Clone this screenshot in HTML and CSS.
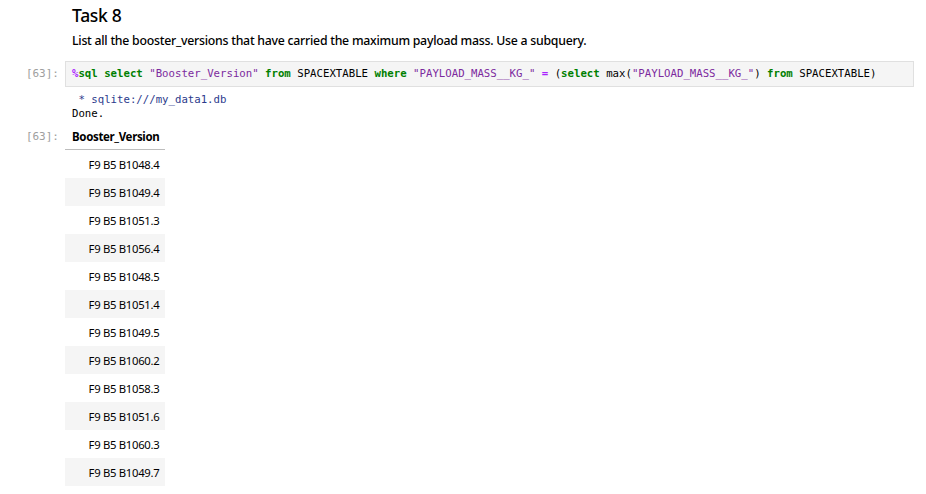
FILE: index.html
```html
<!DOCTYPE html>
<html>
<head>
<meta charset="utf-8">
<link rel="stylesheet" href="styles.css">
</head>
<body>
<div class="notebook">
  <div class="cell md">
    <div class="prompt"></div>
    <div class="content">
      <h3 class="title">Task 8</h3>
      <p class="desc">List all the booster_versions that have carried the maximum payload mass. Use a subquery.</p>
    </div>
  </div>
  <div class="cell code">
    <div class="prompt in">[63]:</div>
    <div class="content">
      <div class="editor"><span class="mg">%</span><span class="kw">sql</span> <span class="kw">select</span> <span class="st">"Booster_Version"</span> <span class="kw">from</span> SPACEXTABLE <span class="kw">where</span> <span class="st">"PAYLOAD_MASS__KG_"</span> <span class="mg">=</span> (<span class="kw">select</span> max(<span class="st">"PAYLOAD_MASS__KG_"</span>) <span class="kw">from</span> SPACEXTABLE)</div>
    </div>
  </div>
  <div class="cell out">
    <div class="prompt"></div>
    <div class="content">
      <pre class="stdout"><span class="conn"> * sqlite:///my_data1.db</span>
Done.</pre>
    </div>
  </div>
  <div class="cell out">
    <div class="prompt in">[63]:</div>
    <div class="content">
      <table class="result">
        <thead><tr><th>Booster_Version</th></tr></thead>
        <tbody>
          <tr><td>F9 B5 B1048.4</td></tr>
          <tr><td>F9 B5 B1049.4</td></tr>
          <tr><td>F9 B5 B1051.3</td></tr>
          <tr><td>F9 B5 B1056.4</td></tr>
          <tr><td>F9 B5 B1048.5</td></tr>
          <tr><td>F9 B5 B1051.4</td></tr>
          <tr><td>F9 B5 B1049.5</td></tr>
          <tr><td>F9 B5 B1060.2</td></tr>
          <tr><td>F9 B5 B1058.3</td></tr>
          <tr><td>F9 B5 B1051.6</td></tr>
          <tr><td>F9 B5 B1060.3</td></tr>
          <tr><td>F9 B5 B1049.7</td></tr>
        </tbody>
      </table>
    </div>
  </div>
</div>
</body>
</html>
```
FILE: styles.css
```css
html, body {
  margin: 0;
  padding: 0;
  background: #ffffff;
}
body {
  font-family: "Noto Sans", "Open Sans", sans-serif;
  color: #000;
}
.notebook {
  width: 914px;
}
.cell {
  display: flex;
}
.prompt {
  width: 65px;
  flex: none;
  box-sizing: border-box;
  padding-right: 6px;
  text-align: right;
  font-family: "DejaVu Sans Mono", monospace;
  font-size: 11px;
  color: #9e9e9e;
}
.content {
  flex: 1;
  min-width: 0;
}
.md .content {
  padding-left: 7px;
}
.title {
  margin: 0;
  padding-top: 0;
  font-size: 17.5px;
  font-weight: 500;
  letter-spacing: -0.3px;
  line-height: 30px;
  color: #000;
}
.desc {
  margin: 0;
  padding-top: 1px;
  font-size: 12.3px;
  font-weight: 500;
  letter-spacing: -0.25px;
  line-height: 20px;
  color: #000;
}
.code {
  margin-top: 10px;
}
.code .prompt {
  line-height: 24px;
  padding-top: 1px;
}
.editor {
  background: #f5f5f5;
  border: 1px solid #e0e0e0;
  height: 24px;
  line-height: 24px;
  padding-left: 6px;
  font-family: "DejaVu Sans Mono", monospace;
  font-size: 10.7px;
  color: #000;
  white-space: pre;
}
.kw { color: #008000; font-weight: bold; }
.mg { color: #aa22ff; font-weight: bold; }
.st { color: #7c2a9e; }
.out .stdout {
  margin: 6px 0 0 0;
  padding-left: 7px;
  font-family: "DejaVu Sans Mono", monospace;
  font-size: 10.7px;
  line-height: 14px;
  color: #000;
}
.conn {
  color: #2b3a8c;
}
.out .prompt.in {
  line-height: 26px;
  padding-top: 3px;
}
.result {
  margin-top: 3px;
  border-collapse: collapse;
  font-size: 11.3px;
  letter-spacing: -0.3px;
}
.result th {
  font-weight: bold;
  text-align: right;
  height: 25px;
  padding: 0 6px 0 7px;
  border-bottom: 1px solid #bdbdbd;
  font-size: 11.5px;
  letter-spacing: -0.35px;
}
.result td {
  text-align: right;
  height: 28px;
  padding: 0 6px 0 7px;
}
.result tbody tr:nth-child(even) {
  background: #f5f5f5;
}
```
